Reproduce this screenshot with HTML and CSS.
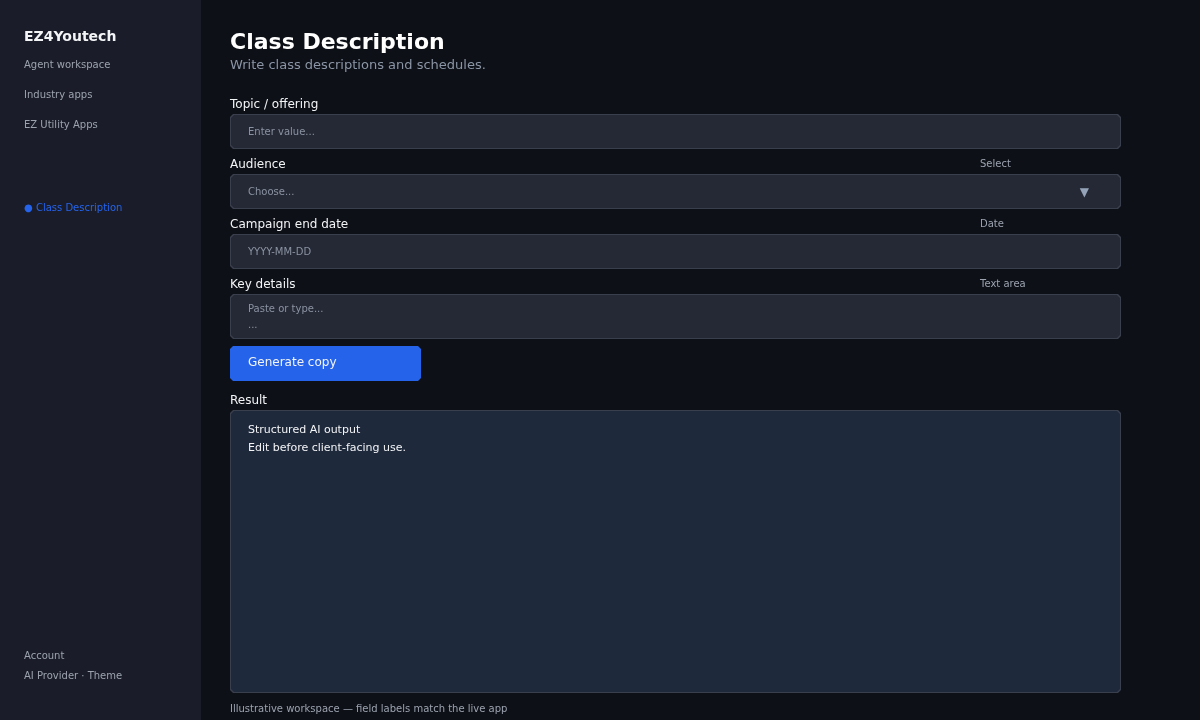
FILE: index.html
```html
<!DOCTYPE html>
<html lang="en">
<head>
<meta charset="utf-8">
<title>Class Description</title>
<link rel="stylesheet" href="styles.css">
</head>
<body>
<div class="app">
  <aside class="sidebar">
    <div class="brand">EZ4Youtech</div>
    <nav class="nav">
      <div class="nav-item">Agent workspace</div>
      <div class="nav-item">Industry apps</div>
      <div class="nav-item">EZ Utility Apps</div>
    </nav>
    <div class="nav-active">● Class Description</div>
    <div class="side-foot">
      <div class="foot-item">Account</div>
      <div class="foot-item">AI Provider · Theme</div>
    </div>
  </aside>
  <main class="main">
    <h1 class="title">Class Description</h1>
    <p class="subtitle">Write class descriptions and schedules.</p>
    <div class="form">
      <div class="field">
        <div class="label-row"><span class="label">Topic / offering</span></div>
        <div class="control">Enter value...</div>
      </div>
      <div class="field">
        <div class="label-row"><span class="label">Audience</span><span class="hint">Select</span></div>
        <div class="control control-select"><span>Choose...</span><span class="arrow">▼</span></div>
      </div>
      <div class="field">
        <div class="label-row"><span class="label">Campaign end date</span><span class="hint">Date</span></div>
        <div class="control">YYYY-MM-DD</div>
      </div>
      <div class="field">
        <div class="label-row"><span class="label">Key details</span><span class="hint">Text area</span></div>
        <div class="control control-area"><span>Paste or type...</span><span>...</span></div>
      </div>
    </div>
    <div class="button">Generate copy</div>
    <div class="label result-label">Result</div>
    <div class="result">
      <div>Structured AI output</div>
      <div>Edit before client-facing use.</div>
    </div>
    <div class="note">Illustrative workspace — field labels match the live app</div>
  </main>
</div>
</body>
</html>
```
FILE: styles.css
```css
* { box-sizing: border-box; }
html, body { margin: 0; height: 100%; }
body {
  background: #0d1017;
  color: #fff;
  font-family: "DejaVu Sans", sans-serif;
  overflow: hidden;
}
.app { display: flex; height: 720px; will-change: transform; }
.sidebar {
  width: 201px;
  background: #1a1d29;
  padding: 28px 24px 0;
  display: flex;
  flex-direction: column;
  flex: none;
}
.brand { font-size: 14px; font-weight: 700; line-height: 16px; color: #f3f4f6; }
.nav { margin-top: 15px; display: flex; flex-direction: column; gap: 18px; }
.nav-item, .foot-item { font-size: 10px; line-height: 12px; color: #9ca3af; }
.nav-active { margin-top: 71px; font-size: 10px; line-height: 12px; color: #2563eb; }
.side-foot { margin-top: auto; margin-bottom: 38px; display: flex; flex-direction: column; gap: 8px; }
.main { flex: 1; padding: 28px 0 0 29px; min-width: 0; }
.title { margin: 0; font-size: 22px; font-weight: 700; line-height: 27px; color: #fff; }
.subtitle { margin: 0; font-size: 13px; line-height: 19px; color: #8b95a5; }
.form { margin-top: 22px; display: flex; flex-direction: column; gap: 7px; width: 891px; }
.field { display: flex; flex-direction: column; }
.label-row { display: grid; grid-template-columns: 750px 1fr; height: 18px; padding-bottom: 2px; align-items: center; }
.label { font-size: 12px; line-height: 16px; color: #f3f4f6; }
.hint { font-size: 10px; color: #9ca3af; position: relative; top: -1px; }
.control, .button, .result {
  position: relative;
  z-index: 0;
  clip-path: polygon(3px 0, calc(100% - 3px) 0, 100% 3px, 100% calc(100% - 3px), calc(100% - 3px) 100%, 3px 100%, 0 calc(100% - 3px), 0 3px);
}
.control::before, .result::before {
  content: "";
  position: absolute;
  inset: 1px;
  z-index: -1;
  clip-path: polygon(3px 0, calc(100% - 3px) 0, 100% 3px, 100% calc(100% - 3px), calc(100% - 3px) 100%, 3px 100%, 0 calc(100% - 3px), 0 3px);
}
.control {
  height: 35px;
  background: #3a3f4e;
  padding: 0 18px;
  font-size: 10px;
  color: #8b92a1;
  display: flex;
  align-items: center;
}
.control::before { background: #252936; }
.control-select { justify-content: space-between; padding-right: 32px; }
.arrow { font-size: 12px; color: #94a3b8; position: relative; }
.control-area {
  height: 45px;
  flex-direction: column;
  align-items: flex-start;
  justify-content: flex-start;
  padding-top: 9px;
  gap: 4px;
  line-height: 12px;
}
.button {
  margin-top: 7px;
  width: 191px;
  height: 35px;
  background: #2563eb;
  padding: 7px 18px 0;
  font-size: 12px;
  line-height: 18px;
  color: #f3f4f6;
}
.result-label { margin-top: 10px; height: 19px; display: block; line-height: 18px; }
.result {
  width: 891px;
  height: 283px;
  background: #3a3f4e;
  padding: 11px 18px;
  font-size: 11px;
  line-height: 18px;
  color: #f3f4f6;
}
.result::before { background: #1e293b; }
.note { margin-top: 10px; font-size: 10px; line-height: 12px; color: #9ca3af; }
```
